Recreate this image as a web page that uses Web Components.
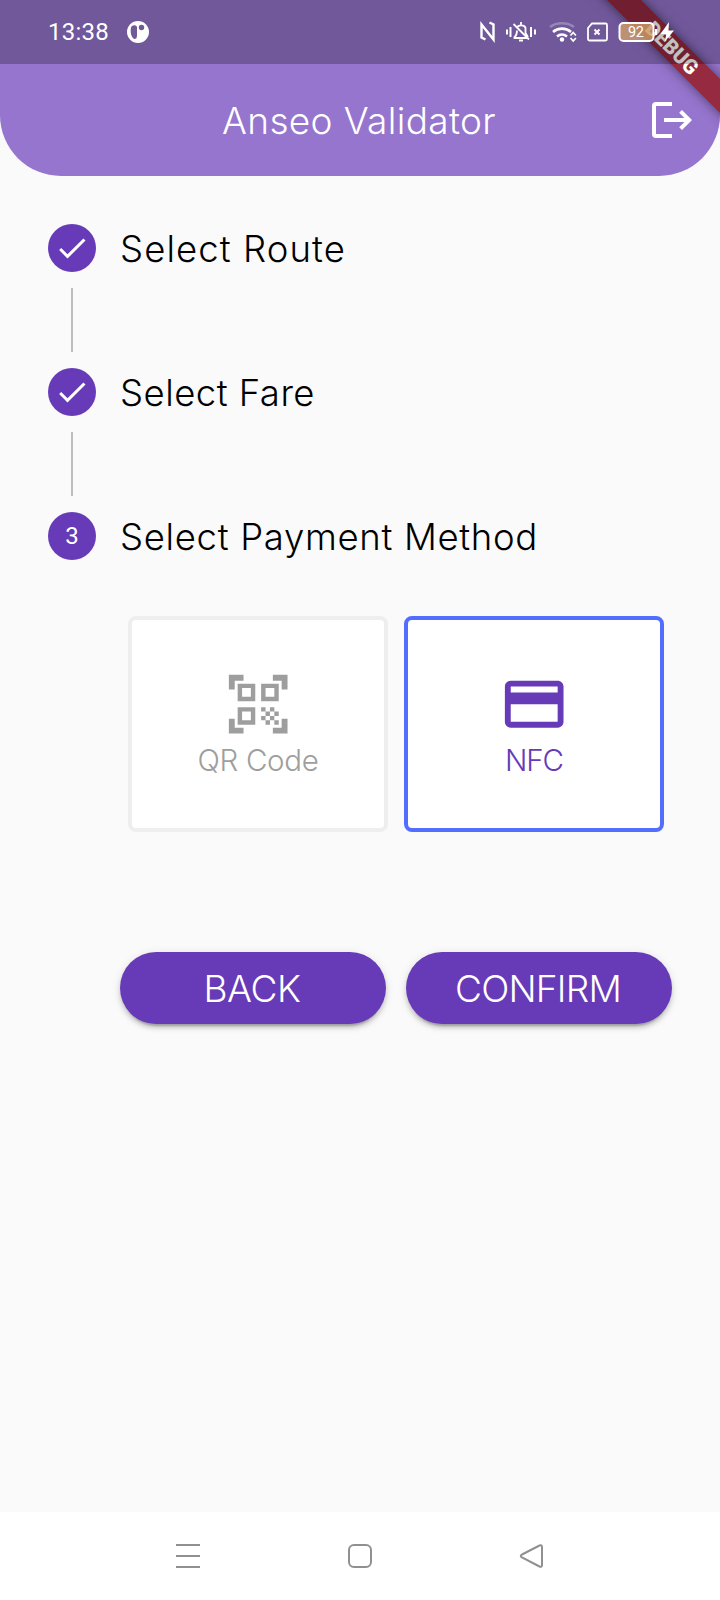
<!DOCTYPE html>
<html lang="en"><head><meta charset="utf-8"><title>Anseo Validator</title>
<style>html,body{margin:0;height:1600px;background:#fafafa;overflow:hidden}</style></head>
<body><validator-app></validator-app>
<script>
const define=(name,html,after)=>customElements.define(name,class extends HTMLElement{
 connectedCallback(){if(this.shadowRoot)return;const t=document.createElement('template');
 t.innerHTML=typeof html==='function'?html(this):html;
 this.attachShadow({mode:'open'}).append(t.content.cloneNode(true));if(after)after(this);}
});
/* A one-line label tracked out to the advance width given in its "width" attribute. */
define('fit-label',e=>`<style>:host{display:block;white-space:nowrap;line-height:1.2;font-optical-sizing:none;font-variation-settings:"opsz" 14;width:${e.getAttribute('width')}px}span{display:inline-block}</style><span><slot></slot></span>`,e=>{
 const s=e.shadowRoot.querySelector('span'),w=+e.getAttribute('width');
 const n=e.textContent.trim().length;s.style.letterSpacing=((w-s.getBoundingClientRect().width)/n)+'px';
});
define('status-bar',`<style>:host{display:flex;position:relative;z-index:3;height:64px;box-sizing:border-box;background:rgba(0,0,0,.242);color:#fff;align-items:center;font:400 24px Roboto,sans-serif}
fit-label{margin-left:48px}svg{display:block;fill:none;stroke:#fff;flex:none}.p{margin-left:17px}.r{margin-left:329px}</style>
<fit-label width="61">13:38</fit-label>
<svg class="p" width="24" height="24" viewBox="0 0 24 24"><circle cx="12" cy="12" r="11" fill="#fff" stroke="none"/><path d="M5 7.500c1-3 5-3 6-.5v8c0 3-1 4-2.500 4-3-1-4.500-6-3.500-11.500z" fill="#715896" stroke="none"/><circle cx="15.500" cy="7.500" r="2.700" fill="#715896" stroke="none"/></svg>
<svg class="r" width="200" height="28" viewBox="479 18 200 28">
<path d="M485.500 39.500L481.500 37.500V24.500L493.500 39.500V24.500L489.500 22.500" stroke-width="2.400"/>
<path d="M507 29.500v5M510.500 27v10M531 27v10M535 29.500v5" stroke-width="2"/>
<path d="M514.500 36.500V38H527M517 28c1-3.500 7.500-3.500 8.500 0v5l2.500 4M514.500 37.500c2-2 2.500-4 2.500-7M513.500 24l15.500 15.500M521 25v-3M519 40.500h4" stroke-width="1.800"/>
<path d="M550 27c6.500-5 17.500-5 24 0" stroke-width="2.500" opacity=".28"/><path d="M553 32c5-4.500 13-4.500 18 0M557 36.500c3-2.500 7-2.500 10 0" stroke-width="2.600"/><circle cx="562" cy="39.500" r="2.200" fill="#fff" stroke="none"/><path d="M570.500 35.500l2.700-3 2.700 3M570.500 38l2.700 3 2.700-3" stroke-width="1.800"/>
<path d="M592 23.500h13.500q1.500 0 1.500 1.500v14q0 1.500-1.500 1.500h-16q-1.500 0-1.500-1.500v-11z" stroke-width="1.800"/><path d="M594.500 29.500l5 5m0-5l-5 5" stroke-width="2"/>
<rect x="619.500" y="23" width="34" height="18" rx="4" fill="#d4a268" fill-opacity=".78" stroke-width="2"/><path d="M656 29v6" stroke-width="2"/><text x="628" y="37" font-family="Roboto" font-size="14.500" fill="#fff" stroke="none" textLength="16">92</text>
<path d="M669 22l-8.500 12h6l-2 8 9.500-11.500h-5.500z" fill="#fff" stroke="none"/></svg>`);
define('app-header',`<style>:host{display:flex;height:112px;color:#fff;align-items:center;justify-content:space-between;box-sizing:border-box;padding:0 24px 0 222px;font:300 37px Inter,sans-serif}svg{display:block;fill:#fff}fit-label{padding-top:2px}</style>
<fit-label width="274">Anseo Validator</fit-label>
<svg width="48" height="48" viewBox="0 0 24 24"><path d="M4 3h8v2H4v14h8v2H4q-2 0-2-2V5q0-2 2-2zM17 7l5 5-5 5-1.400-1.400L18.200 13H8v-2h10.200l-2.600-2.600z"/></svg>`);
define('debug-ribbon',`<style>:host{position:absolute;top:0;right:0;width:200px;height:200px;overflow:hidden;pointer-events:none;z-index:2}
div{position:absolute;left:42px;top:36px;width:220px;height:24px;background:#962a40;box-shadow:0 0 12px rgba(0,0,0,.5);transform:rotate(45deg);color:#fff;font:900 20.400px/24px Roboto,sans-serif;text-align:center}</style><div>DEBUG</div>`);
define('step-row',e=>`<style>:host{display:grid;grid-template-columns:48px 1fr;column-gap:24px;color:#000;font:300 36.500px Inter,sans-serif}
.c{width:48px;height:48px;border-radius:50%;background:#673ab7;color:#fff;display:grid;place-items:center;font:400 24px Roboto,sans-serif}
i{width:2px;height:64px;background:#bdbdbd;margin:16px auto}fit-label{align-self:center;padding-top:2px;margin-bottom:-2px}svg{display:block}</style>
<div class="c">${e.hasAttribute('done')?'<svg width="36" height="36" viewBox="0 0 24 24" fill="#fff"><path d="M9 16.170L4.830 12l-1.420 1.410L9 19 21 7l-1.410-1.410z"/></svg>':'<slot name="n"></slot>'}</div>
<fit-label width="${e.getAttribute('w')}">${e.getAttribute('label')}</fit-label>${e.hasAttribute('done')?'<i></i>':''}`);
define('pay-card',e=>`<style>:host{display:flex;flex-direction:column;align-items:center;box-sizing:border-box;width:260px;height:216px;border:4px solid #eee;border-radius:8px;background:#fff;color:#9e9e9e;padding-top:48.500px;font:300 29.500px Inter,sans-serif}
:host([selected]){border-color:#536dfe;color:#673ab7}::slotted(svg){display:block;width:70.400px;height:70.400px;fill:currentColor;flex:none}fit-label{margin-top:4px}</style><slot></slot><fit-label width="${e.getAttribute('w')}">${e.getAttribute('label')}</fit-label>`);
define('pill-button',e=>`<style>:host{display:block}button{width:266px;height:72px;border:0;border-radius:36px;background:#673ab7;color:#fff;display:flex;align-items:center;justify-content:center;padding:2px 2px 0 0;font:300 37px Inter,sans-serif;box-shadow:0 6px 2px -4px #0003,0 4px 4px #00000024,0 2px 10px #0000001f}</style><button><fit-label width="${e.getAttribute('w')}">${e.getAttribute('label')}</fit-label></button>`);
define('nav-bar',`<style>:host{display:flex;height:88px;background:#fff;justify-content:center;align-items:center;gap:144px}svg{display:block;fill:none;stroke:#909090;stroke-width:2}</style>
<svg width="28" height="28"><path d="M2 3h24M2 14h24M2 25h24"/></svg><svg width="28" height="28"><rect x="3" y="3" width="22" height="22" rx="5"/></svg><svg width="28" height="28"><path d="M4 12.500L21.500 3.500Q24 2.500 24 5V23Q24 25.500 21.500 24.500L4 15.500Q1.500 14 4 12.500z"/></svg>`);
define('validator-app',`<style>:host{display:flex;flex-direction:column;position:relative;width:720px;height:1600px;background:#fafafa}header{background:#9575cd;border-radius:0 0 61px 61px}main{flex:1;padding:48px 48px 0}.cards{display:flex;gap:16px;padding:56px 0 0 80px}.buttons{display:flex;gap:20px;padding:120px 0 0 72px}</style>
<header><status-bar></status-bar><app-header></app-header></header>
<main><step-row done label="Select Route" w="226"></step-row><step-row done label="Select Fare" w="195"></step-row><step-row label="Select Payment Method" w="418"><span slot="n">3</span></step-row>
<div class="cards"><pay-card label="QR Code" w="121"><svg viewBox="0 0 24 24"><path fill-rule="evenodd" d="M5 5h6v6H5zM6.500 6.500v3h3v-3zM13 5h6v6h-6zM14.500 6.500v3h3v-3zM5 13h6v6H5zM6.500 14.500v3h3v-3zM13 13h1.500v1.500H13zM14.500 14.500H16V16h-1.500zM16 13h1.500v1.500H16zM13 16h1.500v1.500H13zM14.500 17.500H16V19h-1.500zM16 16h1.500v1.500H16zM17.500 14.500H19V16h-1.500zM17.500 17.500H19V19h-1.500zM22 7h-2V4h-3V2h5zM22 22v-5h-2v3h-3v2zM2 22h5v-2H4v-3H2zM2 2v5h2V4h3V2z"/></svg></pay-card>
<pay-card selected label="NFC" w="58"><svg viewBox="0 0 24 24"><path d="M20 4H4c-1.110 0-1.990.890-1.990 2L2 18c0 1.110.890 2 2 2h16c1.110 0 2-.890 2-2V6c0-1.110-.890-2-2-2zm0 14H4v-6h16v6zm0-10H4V6h16v2z"/></svg></pay-card></div>
<div class="buttons"><pill-button label="BACK" w="97"></pill-button><pill-button label="CONFIRM" w="166"></pill-button></div></main>
<nav-bar></nav-bar><debug-ribbon></debug-ribbon>`);
</script></body></html>
